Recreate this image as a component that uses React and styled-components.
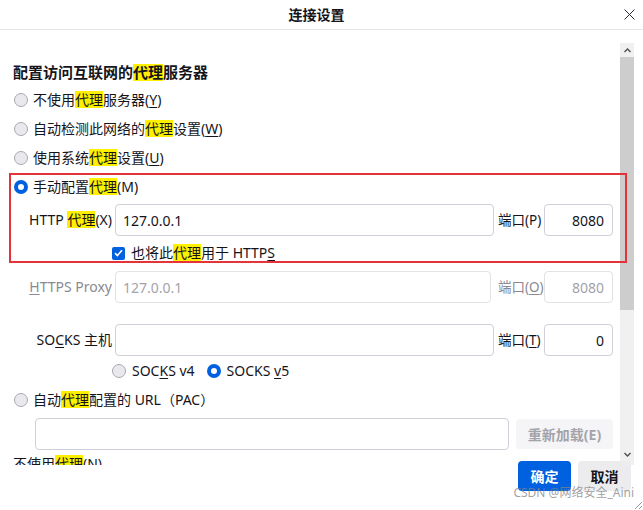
import React from "react";
import styled, { createGlobalStyle } from "styled-components";

const GlobalStyle = createGlobalStyle`
  html, body {
    margin: 0;
    padding: 0;
    background: #ffffff;
  }
  body {
    font-family: "Noto Sans", "Noto Sans CJK SC", sans-serif;
    color: #15141a;
  }
`;

const Dialog = styled.div`
  position: relative;
  width: 643px;
  height: 510px;
  display: flex;
  flex-direction: column;
  overflow: hidden;
  background: #fff;
`;

const TitleBar = styled.div`
  display: flex;
  align-items: center;
  height: 29px;
  border-bottom: 1px solid #e6e6ea;
  padding-right: 8px;
`;

const Title = styled.h1`
  flex: 1;
  margin: 0;
  text-align: center;
  font-size: 14px;
  font-weight: 700;
  line-height: 20px;
  padding-left: 10px;
`;

const CloseButton = styled.button`
  width: 12px;
  height: 12px;
  padding: 0;
  border: none;
  background: none;
  display: flex;
  align-items: center;
  justify-content: center;
`;

const Body = styled.div`
  display: flex;
  height: 435px;
`;

const Content = styled.div`
  flex: 1;
  min-width: 0;
  overflow: hidden;
  padding: 32px 0 0 13px;
  font-size: 14px;
`;

const Heading = styled.h2`
  margin: 0;
  font-size: 15px;
  font-weight: 700;
  line-height: 20px;
`;

const Option = styled.label`
  display: flex;
  align-items: center;
  gap: ${(p) => p.$gap ?? 5}px;
  height: ${(p) => p.$height ?? 29}px;
  margin-top: ${(p) => p.$top ?? 0}px;
  padding-left: ${(p) => p.$indent ?? 1}px;
  line-height: 20px;
  white-space: nowrap;
`;

const RadioGroup = styled.div`
  display: flex;
  align-items: center;
  gap: 12px;
  height: 20px;
  margin-top: ${(p) => p.$top}px;
  padding-left: 99px;
`;

const InlineOption = styled.label`
  display: inline-flex;
  align-items: center;
  gap: 6px;
  line-height: 20px;
`;

const Radio = styled.span`
  box-sizing: border-box;
  width: 14px;
  height: 14px;
  border-radius: 50%;
  flex: none;
  border: ${(p) => (p.$checked ? "4px solid #0061e0" : "1px solid #a8a8b2")};
  background: ${(p) => (p.$checked ? "#ffffff" : "#e9e9ed")};
`;

const Check = styled.span`
  width: 13px;
  height: 13px;
  border-radius: 2px;
  background: #0061e0;
  display: flex;
  align-items: center;
  justify-content: center;
  flex: none;
`;

const Highlight = styled.span`
  display: inline-block;
  background: #fff000;
  line-height: 17px;
`;

const Key = styled.span`
  text-decoration: underline;
  text-underline-offset: 2px;
`;

const ProxyRow = styled.div`
  display: grid;
  grid-template-columns: 102px 383px 46px 69px;
  align-items: center;
  height: 32px;
  margin-top: ${(p) => p.$top}px;
  color: ${(p) => (p.$disabled ? "#8a8a93" : "#15141a")};
`;

const FieldLabel = styled.span`
  text-align: right;
  padding-right: 3px;
  white-space: nowrap;
  line-height: 20px;
`;

const PortLabel = styled.span`
  white-space: nowrap;
  line-height: 20px;
  font-size: 13.5px;
`;

const TextInput = styled.input`
  box-sizing: border-box;
  width: ${(p) => p.$width ?? 379}px;
  height: 32px;
  margin: 0;
  padding: ${(p) => (p.$right ? "0 8px 0 4px" : "0 7px")};
  border: 1px solid ${(p) => (p.disabled ? "#e2e2e7" : "#cfcfd8")};
  border-radius: 4px;
  background: #fff;
  font-family: "Noto Sans", "Noto Sans CJK SC", sans-serif;
  font-size: 14px;
  color: ${(p) => (p.disabled ? "#a3a3aa" : "#15141a")};
  text-align: ${(p) => (p.$right ? "right" : "left")};
  outline: none;
`;

const PacRow = styled.div`
  display: flex;
  align-items: center;
  gap: 7px;
  margin-top: 8px;
  padding-left: 22px;
`;

const ReloadButton = styled.button`
  width: 97px;
  height: 30px;
  border: none;
  border-radius: 4px;
  background: #f5f5f7;
  color: #a3a3aa;
  font-family: "Noto Sans", "Noto Sans CJK SC", sans-serif;
  font-size: 14px;
  font-weight: 700;
`;

const Scrollbar = styled.div`
  width: 14px;
  margin: 13px 9px 0 0;
  background: #f0f0f0;
  display: flex;
  flex-direction: column;
`;

const ScrollArrow = styled.div`
  height: 14px;
  display: flex;
  align-items: center;
  justify-content: center;
  flex: none;
`;

const Thumb = styled.div`
  height: 253px;
  background: #cdcdcd;
  flex: none;
`;

const Track = styled.div`
  flex: ${(p) => (p.$tail ? "none" : 1)};
  height: ${(p) => (p.$tail ? "4px" : "auto")};
`;

const Footer = styled.div`
  display: flex;
  justify-content: flex-end;
  gap: 7px;
  margin-top: -4px;
  padding-right: 12px;
`;

const Button = styled.button`
  width: 53px;
  height: 30px;
  border: none;
  border-radius: 4px;
  font-family: "Noto Sans", "Noto Sans CJK SC", sans-serif;
  font-size: 14px;
  font-weight: 700;
  background: ${(p) => (p.$primary ? "#0061e0" : "#ececef")};
  color: ${(p) => (p.$primary ? "#ffffff" : "#15141a")};
`;

const Annotation = styled.div`
  position: absolute;
  left: 9px;
  top: 173px;
  width: 618px;
  height: 90px;
  box-sizing: border-box;
  border: 2px solid #e5333a;
  pointer-events: none;
`;

const Watermark = styled.div`
  position: absolute;
  right: 9px;
  bottom: 9px;
  font-size: 12px;
  line-height: 16px;
  color: rgba(130, 130, 135, 0.75);
  pointer-events: none;
`;

const Grip = styled.svg`
  position: absolute;
  right: 1px;
  bottom: 1px;
`;

const P = () => <Highlight>代理</Highlight>;

export default function App() {
  return (
    <Dialog>
      <GlobalStyle />
      <TitleBar>
        <Title>连接设置</Title>
        <CloseButton aria-label="关闭">
          <svg width="11" height="11" viewBox="0 0 11 11">
            <path d="M0.5 0.5 L10.5 10.5 M10.5 0.5 L0.5 10.5" stroke="#2b2a33" strokeWidth="1" />
          </svg>
        </CloseButton>
      </TitleBar>

      <Body>
        <Content>
          <Heading>
            配置访问互联网的<P />服务器
          </Heading>
          <Option $top={3}>
            <Radio />
            <span>
              不使用<P />服务器(<Key>Y</Key>)
            </span>
          </Option>
          <Option>
            <Radio />
            <span>
              自动检测此网络的<P />设置(<Key>W</Key>)
            </span>
          </Option>
          <Option>
            <Radio />
            <span>
              使用系统<P />设置(<Key>U</Key>)
            </span>
          </Option>
          <Option>
            <Radio $checked />
            <span>
              手动配置<P />(M)
            </span>
          </Option>

          <ProxyRow $top={3}>
            <FieldLabel>
              HTTP <P />(X)
            </FieldLabel>
            <TextInput readOnly value="127.0.0.1" />
            <PortLabel>端口(P)</PortLabel>
            <TextInput readOnly value="8080" $width={69} $right />
          </ProxyRow>

          <Option $top={7} $height={20} $indent={99} $gap={6}>
            <Check>
              <svg width="9" height="8" viewBox="0 0 9 8">
                <path d="M1 4.2 L3.4 6.5 L8 1.2" fill="none" stroke="#fff" strokeWidth="1.6" />
              </svg>
            </Check>
            <span>
              也将此<P />用于 HTTP<Key>S</Key>
            </span>
          </Option>

          <ProxyRow $top={8} $disabled>
            <FieldLabel>
              <Key>H</Key>TTPS Proxy
            </FieldLabel>
            <TextInput disabled value="127.0.0.1" $width={376} />
            <PortLabel>
              端口(<Key>O</Key>)
            </PortLabel>
            <TextInput disabled value="8080" $width={69} $right />
          </ProxyRow>

          <ProxyRow $top={21}>
            <FieldLabel>
              SO<Key>C</Key>KS 主机
            </FieldLabel>
            <TextInput readOnly value="" />
            <PortLabel>
              端口(<Key>T</Key>)
            </PortLabel>
            <TextInput readOnly value="0" $width={69} $right />
          </ProxyRow>

          <RadioGroup $top={5}>
            <InlineOption>
              <Radio />
              <span>
                SOC<Key>K</Key>S v4
              </span>
            </InlineOption>
            <InlineOption>
              <Radio $checked />
              <span>
                SOCKS <Key>v</Key>5
              </span>
            </InlineOption>
          </RadioGroup>

          <Option $top={9} $height={20}>
            <Radio />
            <span>
              自动<P />配置的 URL（PAC）
            </span>
          </Option>

          <PacRow>
            <TextInput readOnly value="" $width={474} />
            <ReloadButton>重新加载(E)</ReloadButton>
          </PacRow>

          <Option $top={4} $height={20} $indent={0}>
            <span>
              不使用<P />(N)
            </span>
          </Option>
        </Content>

        <Scrollbar>
          <ScrollArrow>
            <svg width="7" height="5" viewBox="0 0 7 5">
              <path d="M0.5 4 L3.5 1 L6.5 4" fill="none" stroke="#505050" strokeWidth="1.4" />
            </svg>
          </ScrollArrow>
          <Thumb />
          <Track />
          <ScrollArrow>
            <svg width="7" height="5" viewBox="0 0 7 5">
              <path d="M0.5 1 L3.5 4 L6.5 1" fill="none" stroke="#505050" strokeWidth="1.4" />
            </svg>
          </ScrollArrow>
          <Track $tail />
        </Scrollbar>
      </Body>

      <Footer>
        <Button $primary>确定</Button>
        <Button>取消</Button>
      </Footer>

      <Annotation />
      <Watermark>CSDN @网络安全_Aini</Watermark>
      <Grip width="8" height="8" viewBox="0 0 8 8">
        <path d="M1 8 L8 1 M5 8 L8 5" stroke="#9a9a9a" strokeWidth="1" />
      </Grip>
    </Dialog>
  );
}
